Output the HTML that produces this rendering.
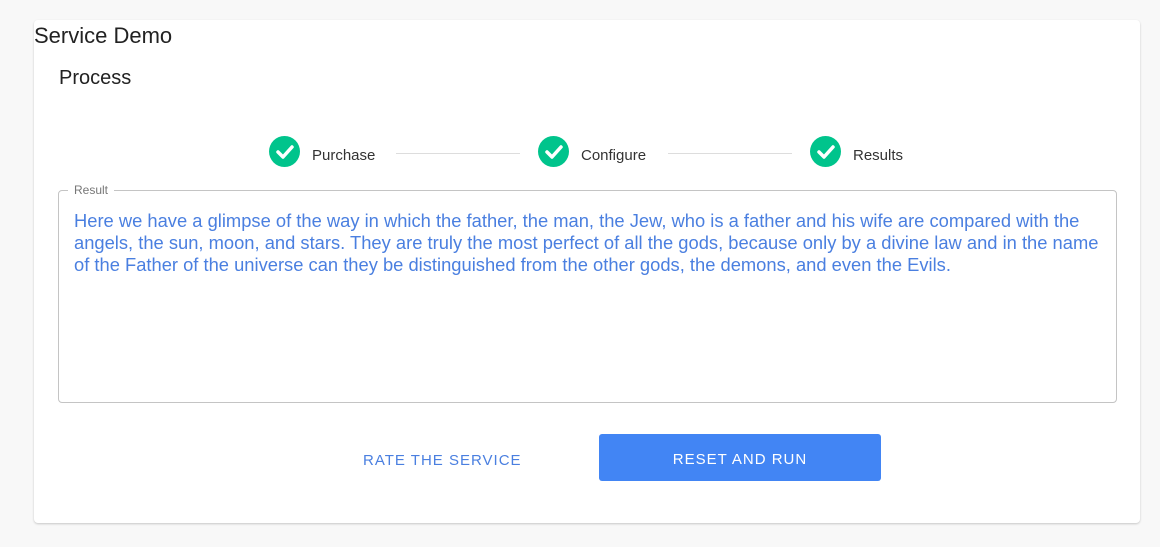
<!DOCTYPE html>
<html><head><style>
body{margin:0;width:1160px;height:547px;background:#f8f8f8;font-family:"Liberation Sans",sans-serif;position:relative;overflow:hidden}
.card{position:absolute;left:34px;top:20px;width:1106px;height:503px;background:#fff;border-radius:4px;box-shadow:0 1px 2px rgba(0,0,0,.2)}
.t{position:absolute;color:#222}
.circ{position:absolute;width:31px;height:31px;border-radius:50%;background:#00c48c}
.circ svg{position:absolute;left:0;top:0}
.lab{position:absolute;font-size:15px;color:#333;top:147px}
.line{position:absolute;top:153px;height:1px;background:#ddd}
.box{position:absolute;left:58px;top:190px;width:1057px;height:211px;border:1px solid #c4c4c4;border-radius:4px}
.leg{position:absolute;left:68px;top:183px;background:#fff;padding:0 6px;font-size:12px;color:#777}
.txt{position:absolute;left:74px;top:210px;width:1035px;font-size:18.35px;line-height:22px;color:#4a7fe0}
.b1{position:absolute;left:363px;top:452px;font-size:15px;letter-spacing:1px;color:#4a7fe0}
.b2{position:absolute;left:599px;top:434px;width:282px;height:47px;background:#4285f4;border-radius:3px;color:#fff;font-size:15px;letter-spacing:1px;text-align:center;line-height:51px}
</style></head><body>
<div class="card"></div>
<div class="t" style="left:34px;top:23px;font-size:22px">Service Demo</div>
<div class="t" style="left:59px;top:67px;font-size:20px">Process</div>
<div class="circ" style="left:269px;top:136px"><svg width="31" height="31"><path d="M9 16l5 5 9-10" stroke="#fff" stroke-width="3.5" fill="none" stroke-linecap="round" stroke-linejoin="round"/></svg></div>
<div class="lab" style="left:312px">Purchase</div>
<div class="line" style="left:396px;width:124px"></div>
<div class="circ" style="left:538px;top:136px"><svg width="31" height="31"><path d="M9 16l5 5 9-10" stroke="#fff" stroke-width="3.5" fill="none" stroke-linecap="round" stroke-linejoin="round"/></svg></div>
<div class="lab" style="left:581px">Configure</div>
<div class="line" style="left:668px;width:124px"></div>
<div class="circ" style="left:810px;top:136px"><svg width="31" height="31"><path d="M9 16l5 5 9-10" stroke="#fff" stroke-width="3.5" fill="none" stroke-linecap="round" stroke-linejoin="round"/></svg></div>
<div class="lab" style="left:853px">Results</div>
<div class="box"></div>
<div class="leg">Result</div>
<div class="txt">Here we have a glimpse of the way in which the father, the man, the Jew, who is a father and his wife are compared with the angels, the sun, moon, and stars. They are truly the most perfect of all the gods, because only by a divine law and in the name of the Father of the universe can they be distinguished from the other gods, the demons, and even the Evils.</div>
<div class="b1">RATE THE SERVICE</div>
<div class="b2">RESET AND RUN</div>
</body></html>
